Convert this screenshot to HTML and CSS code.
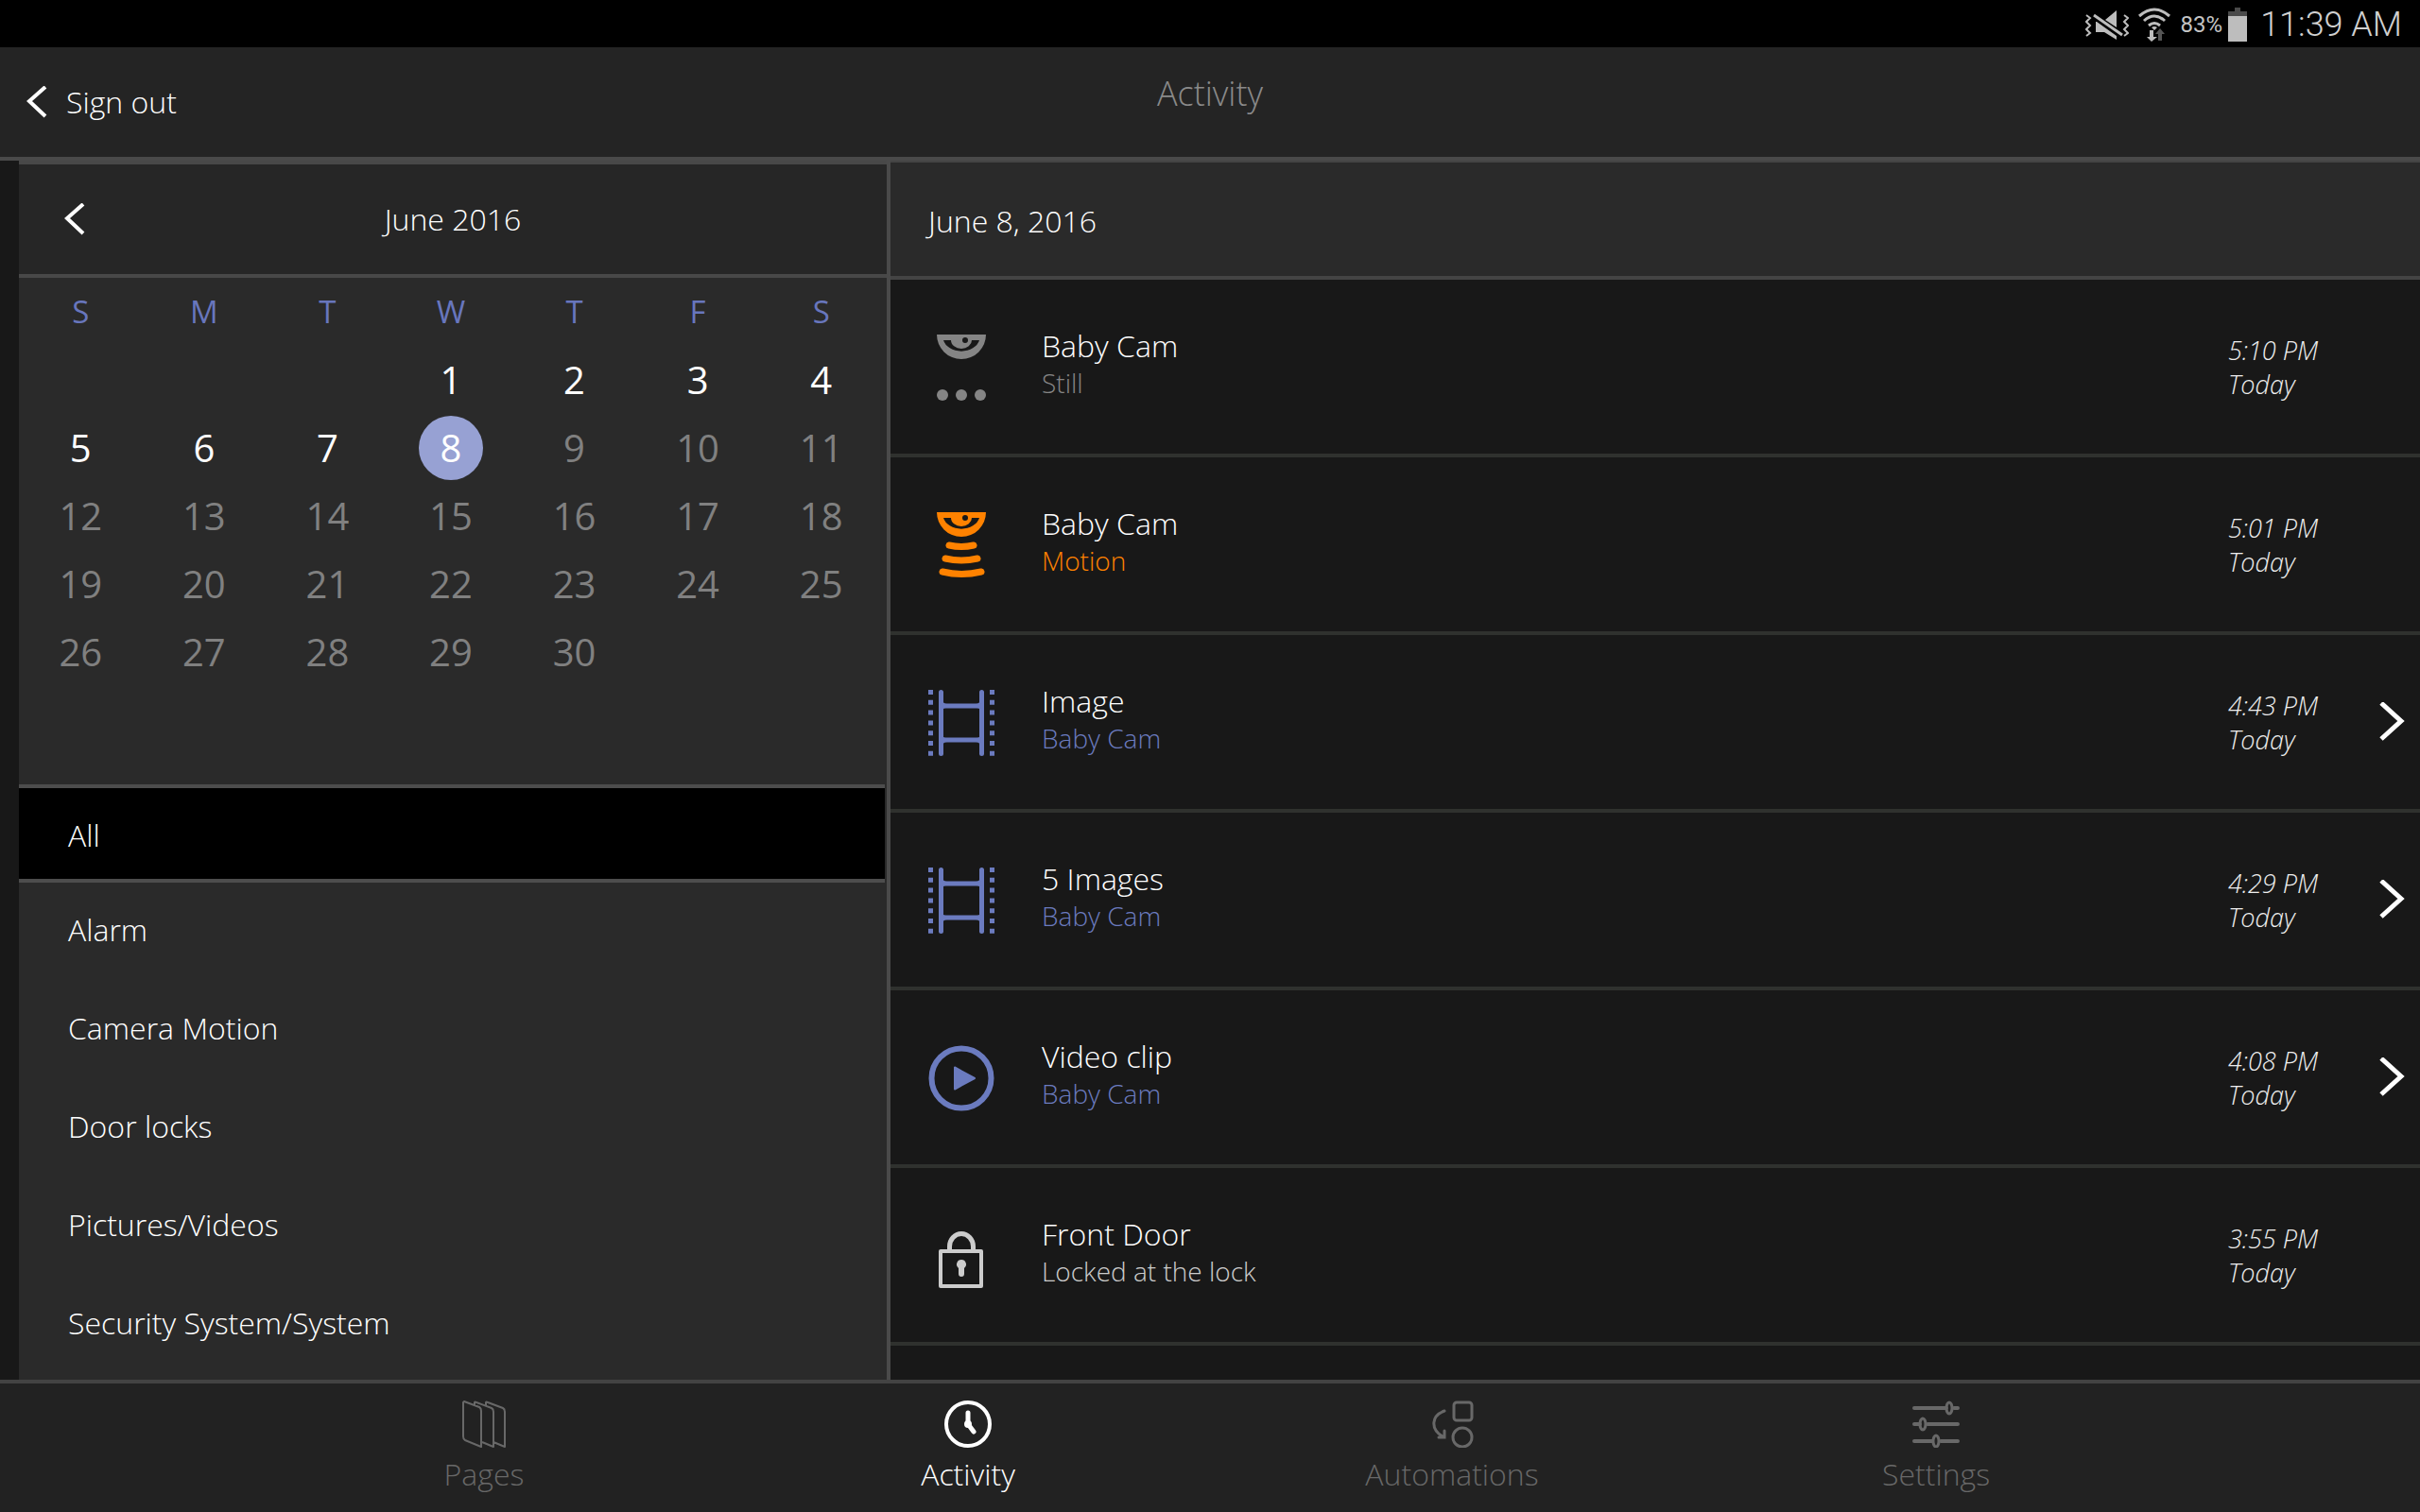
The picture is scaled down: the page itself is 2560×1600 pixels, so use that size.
FILE: index.html
```html
<!DOCTYPE html>
<html lang="en">
<head>
<meta charset="utf-8">
<title>Activity</title>
<meta name="viewport" content="width=device-width, initial-scale=1">
<link rel="stylesheet" href="styles.css">
</head>
<body>
<svg class="sprite" aria-hidden="true">
  <symbol id="back" viewBox="0 0 24 34"><path d="M20 1 3 16l17 16" fill="none" stroke="currentColor" stroke-width="4"/></symbol>
  <symbol id="next" viewBox="0 0 28 42"><path d="M2 1l21 19L2 39" fill="none" stroke="currentColor" stroke-width="5"/></symbol>
  <symbol id="eye" viewBox="0 0 72 72">
    <path fill="currentColor" fill-rule="evenodd" d="M10 2H62A26 26 0 0 1 10 2ZM17 8A19.500 15 0 0 0 55 8H47A11 9 0 0 1 25 8ZM37 8a3 3 0 1 0 6 0a3 3 0 1 0-6 0Z"/>
  </symbol>
  <symbol id="film" viewBox="0 0 72 72">
    <g fill="none" stroke="currentColor">
      <path stroke-width="5" stroke-linecap="round" d="M14.500 4.500V69.500M57.500 4.500V69.500"/>
      <path stroke-width="5" d="M14 19H58M14 55H58"/>
      <path stroke-width="5" stroke-dasharray="5 5.800" d="M3.500 2V72M68.500 2V72"/>
    </g>
    <path fill="currentColor" d="M16 13q1 4 5 4h-5zM56 13q-1 4-5 4h5zM16 25q0-4 4-4h-4zM56 25q0-4-4-4h4zM16 49q0 4 4 4h-4zM56 49q0 4-4 4h4zM16 61q1-4 5-4h-5zM56 61q-1-4-5-4h5z"/>
  </symbol>
  <symbol id="play" viewBox="0 0 72 72">
    <circle cx="36" cy="37" r="31.500" fill="none" stroke="currentColor" stroke-width="6"/>
    <path fill="currentColor" stroke="currentColor" stroke-width="2" stroke-linejoin="round" d="M29 25.500V48.500L50 37Z"/>
  </symbol>
  <symbol id="lock" viewBox="0 0 72 72">
    <g fill="none" stroke="currentColor" stroke-linejoin="round">
      <path stroke-width="5" d="M23.500 31V27a12.500 13.500 0 0 1 25 0V31"/>
      <rect x="14" y="32" width="43" height="37" stroke-width="4"/>
    </g>
    <path fill="currentColor" d="M36 41a5 5 0 0 0-3 9v6q0 3 3 3t3-3v-6a5 5 0 0 0-3-9z"/>
  </symbol>
</svg>

<div class="status">
  <svg class="status-mute" viewBox="0 0 46 32" fill="none" stroke="#bdbdbd" stroke-width="2">
    <path d="M1 6l4 3-4 4 4 4-4 4 4 4-4 3M41 6l4 3-4 4 4 4-4 4 4 4-4 3"/>
    <path fill="#bdbdbd" stroke="none" d="M11 13v11h9l13 8v-4L12 13zM21 11l12-10v18z"/>
    <path stroke-width="3" d="M9 6l30 21"/>
  </svg>
  <svg class="status-wifi" viewBox="0 0 34 38" fill="none" stroke="#bdbdbd" stroke-width="3">
    <path d="M1 10q16-14 32 0M6 15q11-10 22 0M11 20q6-5 12 0"/>
    <path fill="#bdbdbd" stroke="none" d="M17 25l-3-3q3-2 6 0zM12 25h4v7h4l-6 5-5-5h3z"/>
    <path fill="#555" stroke="none" d="M21 36v-7h-3l5-6 5 6h-3v7z"/>
  </svg>
  <span class="status-level">83%</span>
  <svg class="status-battery" viewBox="0 0 20 36"><path fill="#4a4a4a" d="M7 0h6v4h7v5H0V4h7z"/><path fill="#bdbdbd" d="M0 9h20v27H0z"/></svg>
  <span class="status-time">11:39 AM</span>
</div>

<header class="topbar">
  <button class="signout" type="button"><svg class="back"><use href="#back"/></svg>Sign out</button>
  <h1 class="title">Activity</h1>
</header>

<main class="main">
  <aside class="side">
    <div class="month">
      <button class="prev" type="button" aria-label="Previous month"><svg class="back"><use href="#back"/></svg></button>
      <h2 class="month-name">June 2016</h2>
    </div>
    <table class="calendar">
      <thead>
        <tr><th>S</th><th>M</th><th>T</th><th>W</th><th>T</th><th>F</th><th>S</th></tr>
      </thead>
      <tbody>
        <tr><td></td><td></td><td></td><td><button class="day">1</button></td><td><button class="day">2</button></td><td><button class="day">3</button></td><td><button class="day">4</button></td></tr>
        <tr><td><button class="day">5</button></td><td><button class="day">6</button></td><td><button class="day">7</button></td><td><button class="day selected">8</button></td><td><button class="day" disabled>9</button></td><td><button class="day" disabled>10</button></td><td><button class="day" disabled>11</button></td></tr>
        <tr><td><button class="day" disabled>12</button></td><td><button class="day" disabled>13</button></td><td><button class="day" disabled>14</button></td><td><button class="day" disabled>15</button></td><td><button class="day" disabled>16</button></td><td><button class="day" disabled>17</button></td><td><button class="day" disabled>18</button></td></tr>
        <tr><td><button class="day" disabled>19</button></td><td><button class="day" disabled>20</button></td><td><button class="day" disabled>21</button></td><td><button class="day" disabled>22</button></td><td><button class="day" disabled>23</button></td><td><button class="day" disabled>24</button></td><td><button class="day" disabled>25</button></td></tr>
        <tr><td><button class="day" disabled>26</button></td><td><button class="day" disabled>27</button></td><td><button class="day" disabled>28</button></td><td><button class="day" disabled>29</button></td><td><button class="day" disabled>30</button></td><td></td><td></td></tr>
      </tbody>
    </table>
    <nav class="filters" aria-label="Filter">
      <a class="filter current" href="#all">All</a>
      <a class="filter" href="#alarm">Alarm</a>
      <a class="filter" href="#motion">Camera Motion</a>
      <a class="filter" href="#locks">Door locks</a>
      <a class="filter" href="#media">Pictures/Videos</a>
      <a class="filter" href="#system">Security System/System</a>
    </nav>
  </aside>

  <section class="feed">
    <h2 class="feed-date">June 8, 2016</h2>
    <ul class="events">
      <li class="event still">
        <svg class="icon" viewBox="0 0 72 72"><use href="#eye"/><g fill="currentColor"><circle cx="16" cy="66" r="6"/><circle cx="36" cy="66" r="6"/><circle cx="56" cy="66" r="6"/></g></svg>
        <div class="what"><div class="name">Baby Cam</div><div class="detail">Still</div></div>
        <div class="when">5:10 PM<br>Today</div>
      </li>
      <li class="event motion">
        <svg class="icon" viewBox="0 0 72 72"><use href="#eye"/><path d="M23 37q13 3 26 0M19 51q17 4 34 0M16 65q20 5 41 0" fill="none" stroke="currentColor" stroke-width="7" stroke-linecap="round"/></svg>
        <div class="what"><div class="name">Baby Cam</div><div class="detail">Motion</div></div>
        <div class="when">5:01 PM<br>Today</div>
      </li>
      <li class="event media">
        <svg class="icon"><use href="#film"/></svg>
        <div class="what"><div class="name">Image</div><div class="detail">Baby Cam</div></div>
        <div class="when">4:43 PM<br>Today</div>
        <button class="open" type="button" aria-label="Open image"><svg class="next"><use href="#next"/></svg></button>
      </li>
      <li class="event media">
        <svg class="icon"><use href="#film"/></svg>
        <div class="what"><div class="name">5 Images</div><div class="detail">Baby Cam</div></div>
        <div class="when">4:29 PM<br>Today</div>
        <button class="open" type="button" aria-label="Open images"><svg class="next"><use href="#next"/></svg></button>
      </li>
      <li class="event media">
        <svg class="icon"><use href="#play"/></svg>
        <div class="what"><div class="name">Video clip</div><div class="detail">Baby Cam</div></div>
        <div class="when">4:08 PM<br>Today</div>
        <button class="open" type="button" aria-label="Open video clip"><svg class="next"><use href="#next"/></svg></button>
      </li>
      <li class="event door">
        <svg class="icon"><use href="#lock"/></svg>
        <div class="what"><div class="name">Front Door</div><div class="detail">Locked at the lock</div></div>
        <div class="when">3:55 PM<br>Today</div>
      </li>
    </ul>
  </section>
</main>

<nav class="tabs" aria-label="Main">
  <a class="tab" href="#pages">
    <svg class="tab-icon" viewBox="0 0 50 50" fill="none" stroke="currentColor" stroke-width="2" stroke-linejoin="round"><path d="M3 2v36q0 3 2 4l17 7V11q0-3-2-4L4 1zM15 5V2q0-1 2 0l16 6q2 1 2 4v37l-12-5M27 5V2q0-1 2 0l16 6q2 1 2 4v37l-12-5"/></svg>
    Pages
  </a>
  <a class="tab active" href="#activity" aria-current="page">
    <svg class="tab-icon" viewBox="0 0 50 50" fill="none" stroke="currentColor" stroke-width="4" stroke-linecap="round"><circle cx="25" cy="25" r="23"/><path stroke-width="5" d="M25 13v12l6 8"/><circle cx="25" cy="25" r="2"/></svg>
    Activity
  </a>
  <a class="tab" href="#automations">
    <svg class="tab-icon" viewBox="0 0 50 50" fill="none" stroke="currentColor" stroke-width="3" stroke-linecap="round"><rect x="27" y="2" width="19" height="19" rx="3"/><circle cx="36" cy="39" r="10"/><path d="M17 11C3 16 2 30 15 38M17 32l0 7-6 0"/></svg>
    Automations
  </a>
  <a class="tab" href="#settings">
    <svg class="tab-icon" viewBox="0 0 50 50" fill="none" stroke="currentColor" stroke-width="4" stroke-linecap="round"><path d="M2 8h34M44 8h4M2 25h6M16 25h32M2 43h19M30 43h18"/><g stroke-width="3"><ellipse cx="39" cy="8" rx="3" ry="6"/><ellipse cx="11" cy="25" rx="3" ry="6"/><ellipse cx="25" cy="43" rx="3" ry="6"/></g></svg>
    Settings
  </a>
</nav>
</body>
</html>
```
FILE: styles.css
```css
* { box-sizing: border-box; }

body {
  margin: 0;
  height: 100vh;
  display: flex;
  flex-direction: column;
  overflow: hidden;
  background: #181818;
  color: #fff;
  font: 300 32px/40px "Open Sans", "Noto Sans", sans-serif;
}

h1, h2 { margin: 0; font-size: 32px; font-weight: 300; }
button { margin: 0; padding: 0; border: 0; background: none; color: inherit; font: inherit; cursor: pointer; }
a { color: inherit; text-decoration: none; }
.sprite { display: none; }
svg { display: block; flex: none; }

/* Status bar */
.status {
  height: 50px;
  flex: none;
  display: flex;
  align-items: center;
  justify-content: flex-end;
  padding: 2px 19px 0 0;
  background: #000;
  color: #c4c4c4;
  font-family: Roboto, sans-serif;
}
.status-mute { width: 46px; height: 32px; margin-right: 10px; }
.status-wifi { width: 34px; height: 38px; margin-right: 11px; }
.status-level { font-size: 24px; font-weight: 400; margin-right: 6px; }
.status-battery { width: 20px; height: 36px; margin-right: 14px; }
.status-time { font-size: 36px; font-weight: 300; color: #d0d0d0; }

/* Top bar */
.topbar {
  height: 120px;
  flex: none;
  display: grid;
  grid-template-columns: 1fr auto 1fr;
  border-bottom: 4px solid #4a4a4a;
  background: #242424;
}
.signout { display: flex; align-items: center; gap: 18px; padding-left: 28px; justify-self: start; }
.back { width: 24px; height: 34px; }
.title { padding-top: 29px; font-size: 36px; color: #8a8a8a; }

/* Main */
.main {
  flex: 1;
  min-height: 0;
  display: grid;
  grid-template-columns: 471fr 809fr;
}
.side {
  margin-left: 20px;
  border-right: 4px solid #4a4a4a;
  background: #2a2a2a;
  overflow: hidden;
}
.month {
  height: 124px;
  display: grid;
  grid-template-columns: 80px 1fr 80px;
  align-items: center;
  border: solid #484848;
  border-width: 4px 0;
  background: #262626;
}
.prev { padding-left: 48px; }
.month-name { text-align: center; }

.calendar {
  width: calc(100% - 4px);
  margin-bottom: 104px;
  table-layout: fixed;
  border-collapse: collapse;
  text-align: center;
}
.calendar th, .calendar td { height: 72px; padding: 0; }
.calendar th { font-size: 33px; font-weight: 400; color: #6876bd; }
.day { width: 68px; height: 68px; border-radius: 50%; font-size: 40px; font-weight: 400; }
.day:disabled { color: #808080; }
.day.selected { background: #97a1d3; }
.calendar td { vertical-align: middle; }
.calendar td .day { display: block; margin: 0 auto; }

.filters { margin-right: 2px; }
.filter {
  height: 104px;
  display: flex;
  align-items: center;
  padding: 0 52px 4px;
}
.filter.current { padding: 4px 52px 0; border: solid #4d4d4d; border-width: 4px 0; background: #000; }

/* Feed */
.feed { overflow: hidden; }
.feed-date {
  height: 126px;
  display: flex;
  align-items: center;
  padding: 4px 0 0 40px;
  border: solid #444;
  border-width: 2px 0 4px;
  background: #2a2a2a;
}
.events { margin: 0; padding: 0; list-style: none; }
.event {
  height: 188px;
  display: grid;
  grid-template-columns: 72px 1fr 160px 27px;
  padding: 0 16px 0 39px;
  border-bottom: 4px solid #2f312e;
}
.icon { width: 72px; height: 72px; align-self: center; }
.what { padding: 50px 0 0 49px; }
.detail { font-size: 28px; line-height: 38px; }
.when { padding-top: 57px; font-size: 27px; line-height: 36px; font-style: italic; color: #eee; }
.open { align-self: center; }
.next { width: 28px; height: 42px; }

.still .icon, .still .detail { color: #858585; }
.motion .icon, .motion .detail { color: #ff8200; }
.media .icon, .media .detail { color: #6b7bbf; }
.door .icon, .door .detail { color: #ccc; }

/* Tabs */
.tabs {
  height: 140px;
  flex: none;
  display: grid;
  grid-template-columns: repeat(4, 1fr);
  padding: 0 10%;
  border-top: 4px solid #434343;
  background: #222;
}
.tab {
  display: flex;
  flex-direction: column;
  align-items: center;
  gap: 8px;
  padding-top: 18px;
  color: #686868;
}
.tab.active { color: #fff; }
.tab-icon { width: 50px; height: 50px; }
```
